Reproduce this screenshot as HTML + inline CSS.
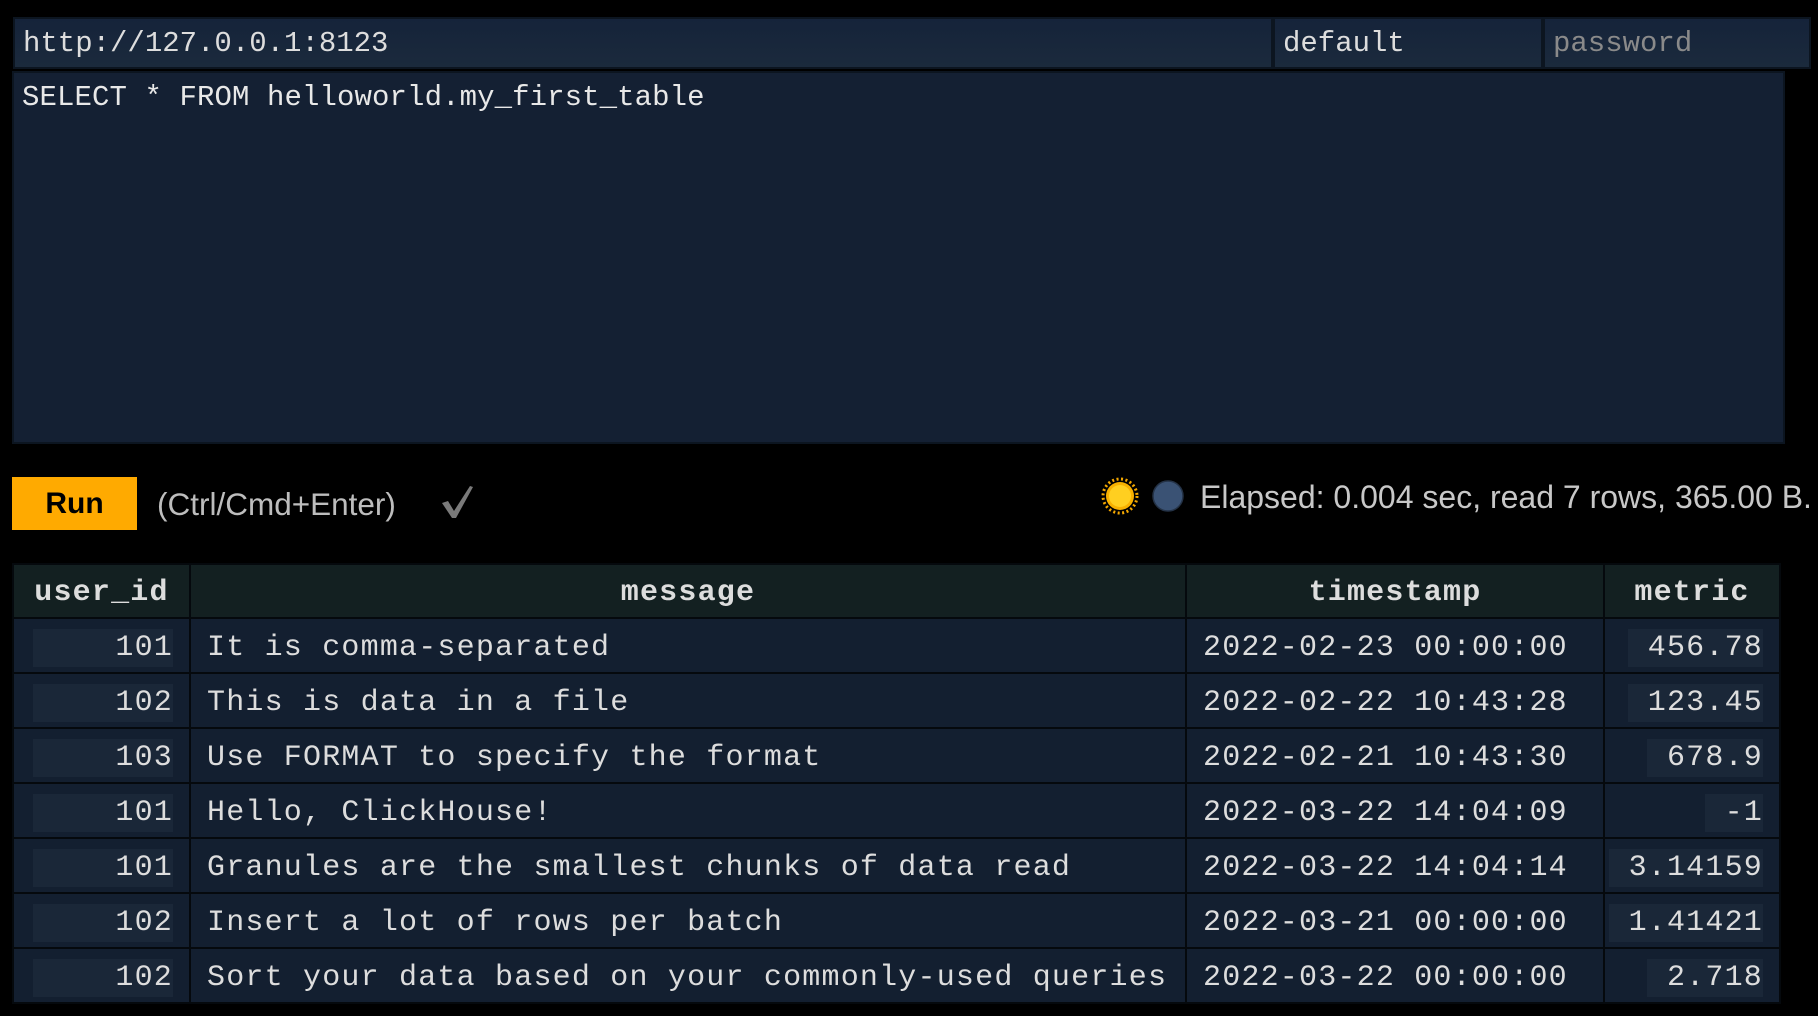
<!DOCTYPE html>
<html><head><meta charset="utf-8"><style>
html,body{margin:0;padding:0;width:1818px;height:1016px;overflow:hidden;background:#000;}
body{position:relative;font-family:"Liberation Mono",monospace;}
.inp{position:absolute;top:17px;height:52px;background:linear-gradient(#15233a,#1b2a3c);border:2px solid #0c1520;box-sizing:border-box;color:#ddd;font-size:29px;line-height:50px;padding-left:8px;}
#ta{position:absolute;left:12px;top:71px;width:1773px;height:373px;background:#142033;border:2px solid #0c1520;box-sizing:border-box;color:#e8e8e8;font-size:29px;padding:5px 8px;line-height:40px;letter-spacing:0.1px}
#run{position:absolute;left:12px;top:477px;width:125px;height:53px;background:#ffaa00;color:#000;font:bold 30px "Liberation Sans",sans-serif;text-align:center;line-height:53px;}
.hint{position:absolute;top:486px;line-height:53px;font:31.5px "Liberation Sans",sans-serif;color:#bdbdbd;}
table{position:absolute;left:12px;top:563px;border-collapse:collapse;table-layout:fixed;}
td,th{height:53px;padding:0;border:2px solid #05090d;font-size:30px;color:#ddd;box-sizing:border-box;letter-spacing:1.2px;padding-top:4px}
th{background:#132021;font-weight:bold;text-align:center;height:54px}
td{background:#131f30;height:55px;white-space:nowrap}
td.n{text-align:right;padding-right:16px}
td.n span{display:inline-block;background:#1a2738;padding-left:20px;line-height:38px}
td.m{padding-left:16px}
</style></head><body>
<div class="inp" style="left:13px;width:1260px">http://127.0.0.1:8123</div>
<div class="inp" style="left:1273px;width:270px">default</div>
<div class="inp" style="left:1543px;width:268px;color:#8a8a8a">password</div>
<div id="ta">SELECT * FROM helloworld.my_first_table</div>
<div id="run">Run</div>
<div class="hint" style="left:157px">(Ctrl/Cmd+Enter)</div>
<svg style="position:absolute;left:438px;top:484px" width="40" height="36"><path d="M4 19 L10 17 L16 27 L32 2 L35 3 L18 34 L14 34 Z" fill="#7a7a7a"/></svg>
<svg style="position:absolute;left:1100px;top:476px" width="100" height="40">
<circle cx="20" cy="20" r="17" fill="none" stroke="#f5a800" stroke-width="3" stroke-dasharray="2 2.5"/>
<circle cx="20" cy="20" r="14" fill="#f7b000"/>
<circle cx="20" cy="20" r="11" fill="#ffcf20"/>
<circle cx="68" cy="20" r="15" fill="#3a5274" stroke="#243246" stroke-width="1.5"/>
</svg>
<div class="hint" style="left:1200px;top:479px;color:#c8c8c8;font-size:32px">Elapsed: 0.004 sec, read 7 rows, 365.00 B.</div>
<table>
<colgroup><col style="width:177px"><col style="width:996px"><col style="width:418px"><col style="width:176px"></colgroup>
<tr><th>user_id</th><th>message</th><th>timestamp</th><th>metric</th></tr>
<tr><td class="n"><span style="width:120px">101</span></td><td class="m">It is comma-separated</td><td class="m">2022-02-23 00:00:00</td><td class="n"><span>456.78</span></td></tr>
<tr><td class="n"><span style="width:120px">102</span></td><td class="m">This is data in a file</td><td class="m">2022-02-22 10:43:28</td><td class="n"><span>123.45</span></td></tr>
<tr><td class="n"><span style="width:120px">103</span></td><td class="m">Use FORMAT to specify the format</td><td class="m">2022-02-21 10:43:30</td><td class="n"><span>678.9</span></td></tr>
<tr><td class="n"><span style="width:120px">101</span></td><td class="m">Hello, ClickHouse!</td><td class="m">2022-03-22 14:04:09</td><td class="n"><span>-1</span></td></tr>
<tr><td class="n"><span style="width:120px">101</span></td><td class="m">Granules are the smallest chunks of data read</td><td class="m">2022-03-22 14:04:14</td><td class="n"><span>3.14159</span></td></tr>
<tr><td class="n"><span style="width:120px">102</span></td><td class="m">Insert a lot of rows per batch</td><td class="m">2022-03-21 00:00:00</td><td class="n"><span>1.41421</span></td></tr>
<tr><td class="n"><span style="width:120px">102</span></td><td class="m">Sort your data based on your commonly-used queries</td><td class="m">2022-03-22 00:00:00</td><td class="n"><span>2.718</span></td></tr>
</table>
</body></html>
